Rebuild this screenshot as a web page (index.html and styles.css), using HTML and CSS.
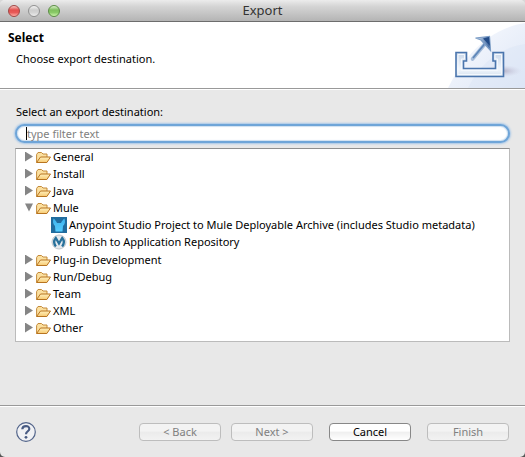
FILE: index.html
```html
<!DOCTYPE html>
<html lang="en">
<head>
<meta charset="utf-8">
<title>Export</title>
<link rel="stylesheet" href="styles.css">
</head>
<body>
<svg class="defs" aria-hidden="true">
  <defs>
    <linearGradient id="folder-front" x1="0" y1="0" x2="0" y2="1"><stop offset="0" stop-color="#fff0bd"/><stop offset="1" stop-color="#f7ca72"/></linearGradient>
    <linearGradient id="mule-blue" x1="0" y1="0" x2="0" y2="1"><stop offset="0" stop-color="#3fb2ec"/><stop offset="1" stop-color="#55cdff"/></linearGradient>
    <linearGradient id="tray-fill" x1="0" y1="0" x2="0" y2="1"><stop offset="0" stop-color="#c9d7e9"/><stop offset=".7" stop-color="#f1f6fc"/><stop offset="1" stop-color="#d5e1ef"/></linearGradient>
    <linearGradient id="arrow-fill" x1="0" y1="0" x2="1" y2="0"><stop offset="0" stop-color="#dce8f5"/><stop offset="1" stop-color="#345f9c"/></linearGradient>
    <linearGradient id="sweep" x1="0" y1="0" x2="1" y2="1"><stop offset="0" stop-color="#fbfcff"/><stop offset="1" stop-color="#dde6f6"/></linearGradient>
    <radialGradient id="tray-shadow"><stop offset="0" stop-color="#9c94ac" stop-opacity=".7"/><stop offset="1" stop-color="#c8c6dc" stop-opacity="0"/></radialGradient>
    <symbol id="folder" viewBox="0 0 16 14">
      <path d="M.6 12.500V4.500L2 2.500h3.500l1.500 1.500h4v3" fill="#fbe0a0" stroke="#c48a3a"/>
      <path d="M.6 12.500L4.500 7h10l-3.600 5.500z" fill="url(#folder-front)" stroke="#b87420" stroke-linejoin="round"/>
    </symbol>
  </defs>
</svg>
<main class="window">
  <header class="titlebar">
    <div class="lights">
      <button class="light light-close" aria-label="Close"></button>
      <button class="light light-minimize" aria-label="Minimize"></button>
      <button class="light light-zoom" aria-label="Zoom"></button>
    </div>
    <span class="window-title">Export</span>
  </header>

  <section class="banner">
    <div class="banner-text">
      <h1>Select</h1>
      <p>Choose export destination.</p>
    </div>
    <svg class="banner-art" viewBox="0 0 95 66" aria-hidden="true">
      <path d="M18 66C32 38 56 7 95 1V66z" fill="url(#sweep)"/>
      <path d="M38 66C51 41 68 27 95 22V66z" fill="#dce5f6" opacity=".5"/>
      <ellipse cx="72" cy="49" rx="20" ry="6" fill="url(#tray-shadow)"/>
      <path d="M26 30.500h10.500v8.500h-3v7.500h32v-7.500h-2.500v-8.500h10.500v24H26z" fill="url(#tray-fill)" stroke="#4a75ad" stroke-width="1.600"/>
      <path d="M28 32.500h6.500v4.500h-3v11.500h36v-11.500h-2.500v-4.500h6.500v20H28z" fill="none" stroke="#f4f8fd" stroke-width="1"/>
      <path d="M42.500 37L54.500 22.500" stroke="#a5bcd9" stroke-width="3.600" stroke-linecap="round"/>
      <path d="M43 36L55 21.500" stroke="#5b84b8" stroke-width="1.600"/>
      <path d="M45.500 16L59.500 14.500L60.500 28.500L56 23.500L51 18z" fill="url(#arrow-fill)" stroke="#7c9dc6" stroke-width="1.200"/>
      <path d="M53 16.500l6-1.500 1 9z" fill="#234c88"/>
    </svg>
  </section>

  <section class="content">
    <label class="filter-label" for="filter">Select an export destination:</label>
    <div class="filter">
      <input id="filter" type="text" placeholder="type filter text">
      <span class="caret"></span>
    </div>
    <ul class="tree">
      <li><button class="row"><i class="twisty"></i><svg class="folder"><use href="#folder"/></svg>General</button></li>
      <li><button class="row"><i class="twisty"></i><svg class="folder"><use href="#folder"/></svg>Install</button></li>
      <li><button class="row"><i class="twisty"></i><svg class="folder"><use href="#folder"/></svg>Java</button></li>
      <li><button class="row" aria-expanded="true"><i class="twisty twisty-open"></i><svg class="folder"><use href="#folder"/></svg>Mule</button>
        <ul class="branch">
          <li><button class="row"><svg class="item-icon" viewBox="0 0 16 16"><path fill="#216c9e" d="M0 0h16v16H0z"/><path d="M2.500 1.500C4 2.500 5 4 6 6h4C11 4 12 2.500 13.500 1.500C14.500 4.500 14 7 12 9L11.500 14.500h-7L4 9C2 7 1.500 4.500 2.500 1.500z" fill="url(#mule-blue)"/></svg>Anypoint Studio Project to Mule Deployable Archive (includes Studio metadata)</button></li>
          <li><button class="row"><svg class="item-icon" viewBox="0 0 16 16"><circle cx="8" cy="8" r="7" fill="#e5e9ed" stroke="#bfc5ca"/><path d="M4.900 12.500C2.500 9.500 2.700 6.500 4.800 4L8 9.500L11.200 4C13.300 6.500 13.500 9.500 11.100 12.500" fill="none" stroke="#28719b" stroke-width="2.300"/></svg>Publish to Application Repository</button></li>
        </ul>
      </li>
      <li><button class="row"><i class="twisty"></i><svg class="folder"><use href="#folder"/></svg>Plug-in Development</button></li>
      <li><button class="row"><i class="twisty"></i><svg class="folder"><use href="#folder"/></svg>Run/Debug</button></li>
      <li><button class="row"><i class="twisty"></i><svg class="folder"><use href="#folder"/></svg>Team</button></li>
      <li><button class="row"><i class="twisty"></i><svg class="folder"><use href="#folder"/></svg>XML</button></li>
      <li><button class="row"><i class="twisty"></i><svg class="folder"><use href="#folder"/></svg>Other</button></li>
    </ul>
  </section>

  <footer class="actions">
    <button class="help" aria-label="Help"><svg viewBox="0 0 20 20"><circle cx="10" cy="10" r="9.300" fill="#f0f1f4" stroke="#52648a" stroke-width="1.200"/><path d="M6.300 7.300C6.500 3 13.600 3 13.300 7C13.200 9.300 10 9.300 10 12.300" fill="none" stroke="#485b83" stroke-width="2.200"/><circle cx="10" cy="15.300" r="1.400" fill="#485b83"/></svg></button>
    <div class="steps">
      <button class="push" disabled>&lt; Back</button>
      <button class="push" disabled>Next &gt;</button>
    </div>
    <button class="push">Cancel</button>
    <button class="push" disabled>Finish</button>
  </footer>
</main>
</body>
</html>
```
FILE: styles.css
```css
* { box-sizing: border-box; }
body {
  margin: 0;
  background: linear-gradient(#d8d8d8 50%, #555 50%);
  font: 11px/17px "Lucida Grande", "Noto Sans", "Open Sans", sans-serif;
  color: #000;
}
button, input { font: inherit; color: inherit; }
button { padding: 0; border: 0; background: none; }
ul { margin: 0; padding: 0; list-style: none; }
.defs { position: absolute; width: 0; height: 0; }
.window {
  display: flex;
  flex-direction: column;
  min-height: 100vh;
  background: #e8e8e8;
  border-radius: 5px;
  overflow: hidden;
}
.titlebar {
  display: grid;
  grid-template-columns: 1fr auto 1fr;
  align-items: center;
  height: 22px;
  padding: 0 8px;
  background: linear-gradient(#ececec, #d5d5d5 30%, #b4b4b4);
  border-bottom: 1px solid #6d6d6d;
}
.lights { display: flex; gap: 8px; }
.light {
  width: 12px;
  height: 12px;
  border: 1px solid #909090;
  border-radius: 50%;
}
.light-close { border-color: #a04644; background: linear-gradient(#f6c4c0, #e4504e 40%, #e85a58 65%, #ffb0a8); }
.light-minimize { background: linear-gradient(#f4f4f4, #cdcdcd 40%, #d4d4d4 65%, #ececec); }
.light-zoom { border-color: #5a8c44; background: linear-gradient(#d8efc8, #7fbf5e 40%, #8aca68 65%, #ccf5ac); }
.window-title { font-size: 13px; color: #333; }
.banner {
  display: flex;
  justify-content: space-between;
  height: 68px;
  background: #fff;
  border-bottom: 1px solid #fff;
  box-shadow: inset 0 -1px #999;
}
.banner-text { padding: 7px 8px; }
.banner h1 { margin: 0; font-size: 12px; line-height: 17px; }
.banner p { margin: 4px 8px; }
.banner-art { width: 95px; height: 66px; }
.content { flex: 1; padding: 13px 15px 0; }
.filter-label { display: block; padding-left: 1px; }
.filter { position: relative; margin-top: 4px; }
.filter input {
  display: block;
  width: 100%;
  height: 19px;
  padding: 0 10px;
  border: 2px solid #6fa5d8;
  border-radius: 10px;
  outline: 0;
  background: #fff;
  box-shadow: 0 0 2px 1px #a6c7e8, inset 0 0 1px 1px #cfe0f1;
}
.filter input::placeholder { color: #808080; opacity: 1; }
.caret { position: absolute; left: 11px; top: 3px; width: 1px; height: 13px; background: #000; }
.tree {
  min-height: 194px;
  margin-top: 5px;
  background: #fff;
  border: 1px solid #bbb;
  border-top-color: #8e8e8e;
}
.row {
  display: flex;
  align-items: center;
  width: 100%;
  height: 17px;
  padding: 0 0 2px 9px;
  line-height: 15px;
  text-align: left;
  white-space: nowrap;
}
.twisty {
  width: 8px;
  height: 10px;
  margin-right: 3px;
  background: #858585;
  clip-path: polygon(0 0, 100% 50%, 0 100%);
}
.twisty-open { clip-path: polygon(0 10%, 100% 10%, 50% 90%); }
.folder { width: 16px; height: 14px; margin-right: 1px; }
.branch { padding-bottom: 1px; }
.branch .row { padding-left: 35px; }
.item-icon { width: 16px; height: 16px; margin-right: 2px; }
.actions {
  display: flex;
  align-items: center;
  gap: 16px;
  height: 52px;
  padding: 0 16px;
  border-top: 1px solid #999;
  box-shadow: inset 0 1px #fff;
}
.help { width: 20px; height: 20px; margin-right: auto; }
.help svg { display: block; }
.steps { display: flex; gap: 10px; }
.push {
  width: 82px;
  height: 18px;
  border: 1px solid #888;
  border-radius: 4px;
  background: linear-gradient(#fff 45%, #efefef 50%, #fff);
  line-height: 15px;
}
.push:disabled { border-color: #bdbdbd; background: linear-gradient(#f3f3f3 45%, #ebebeb 50%, #f2f2f2); color: #808080; }
```
